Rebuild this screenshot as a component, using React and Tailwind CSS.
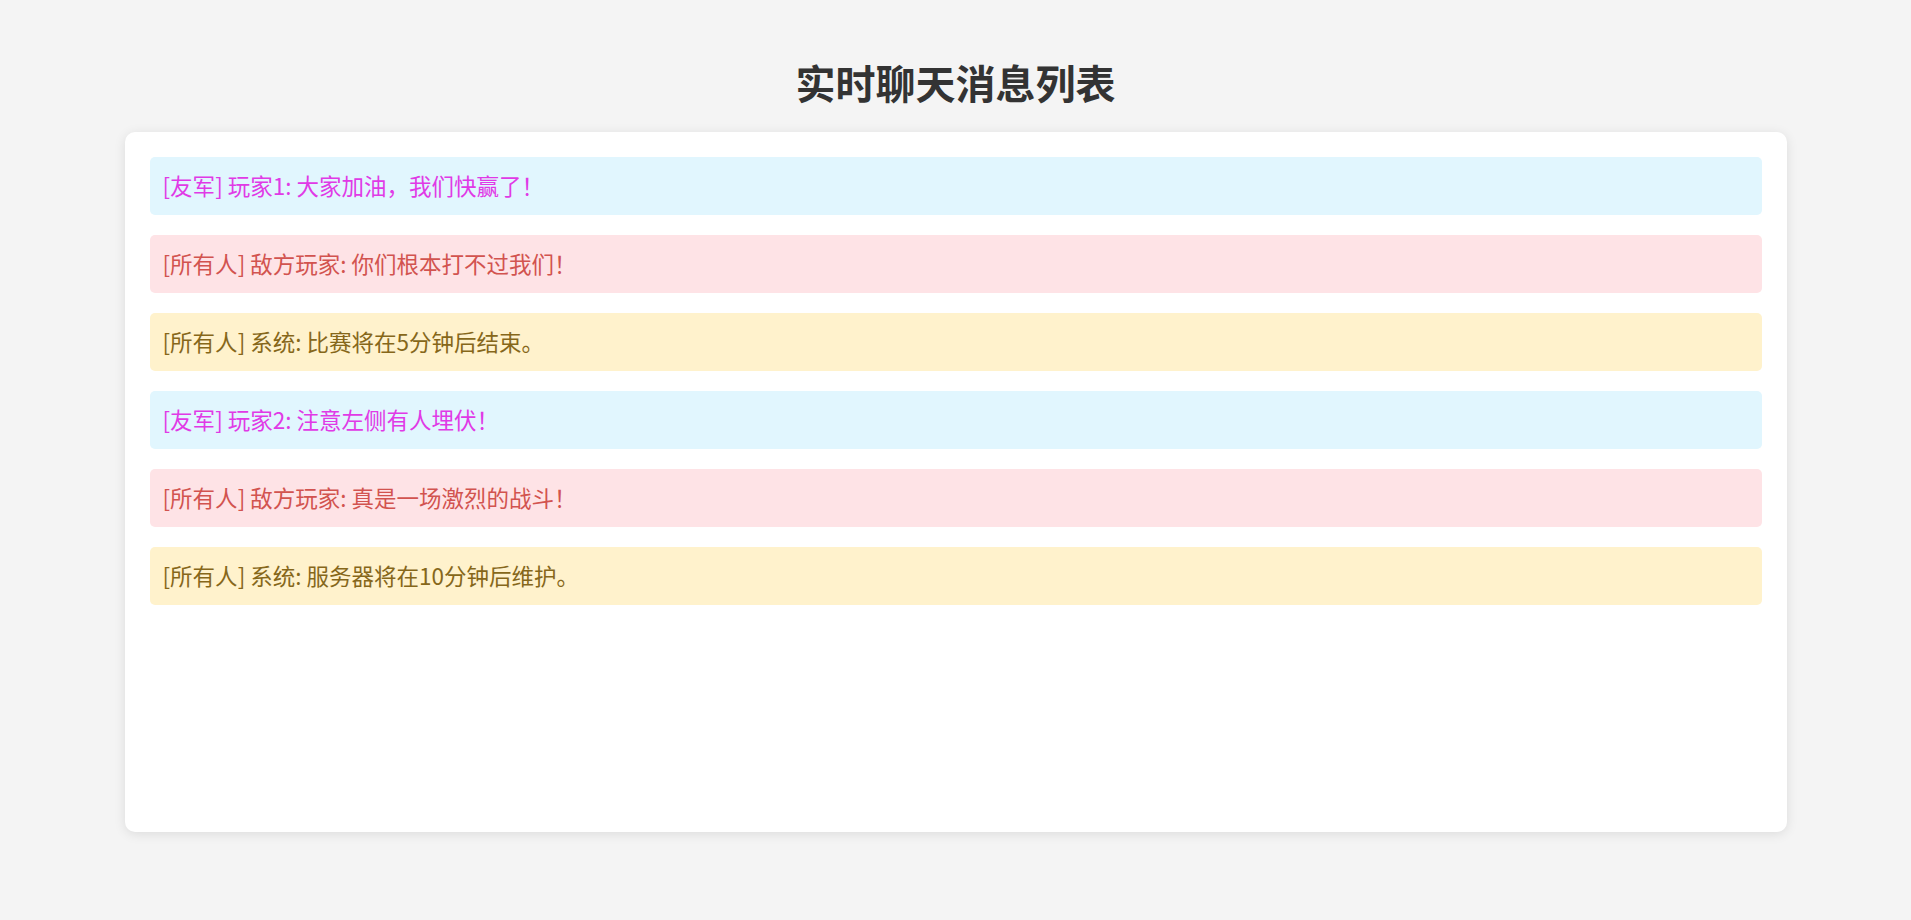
const messages = [
  { id: 1, channel: "友军", sender: "玩家1", text: "大家加油，我们快赢了！", kind: "ally" },
  { id: 2, channel: "所有人", sender: "敌方玩家", text: "你们根本打不过我们！", kind: "enemy" },
  { id: 3, channel: "所有人", sender: "系统", text: "比赛将在5分钟后结束。", kind: "system" },
  { id: 4, channel: "友军", sender: "玩家2", text: "注意左侧有人埋伏！", kind: "ally" },
  { id: 5, channel: "所有人", sender: "敌方玩家", text: "真是一场激烈的战斗！", kind: "enemy" },
  { id: 6, channel: "所有人", sender: "系统", text: "服务器将在10分钟后维护。", kind: "system" },
];

const styles = {
  ally: "bg-[#e1f6fe] text-[#e03ae6]",
  enemy: "bg-[#fee3e6] text-[#d2534f]",
  system: "bg-[#fff2cc] text-[#86671a]",
};

function Message({ m }) {
  return (
    <div className={`h-[58px] flex items-center rounded-[5px] pl-[13px] text-[22.5px] ${styles[m.kind]}`}>
      [{m.channel}] {m.sender}: {m.text}
    </div>
  );
}

export default function App() {
  return (
    <div
      className="min-h-[920px] bg-[#f4f4f4] pt-[58px]"
      style={{ fontFamily: '"Noto Sans CJK SC", "Noto Sans", sans-serif' }}
    >
      <h1 className="text-center text-[40px] leading-[48px] font-bold text-[#333]">实时聊天消息列表</h1>

      <div className="mx-auto mt-[26px] w-[1662px] h-[700px] rounded-[10px] bg-white p-[25px] shadow-[0_2px_12px_rgba(0,0,0,0.1)]">
        <div className="flex flex-col gap-[20px]">
          {messages.map((m) => (
            <Message key={m.id} m={m} />
          ))}
        </div>
      </div>
    </div>
  );
}
